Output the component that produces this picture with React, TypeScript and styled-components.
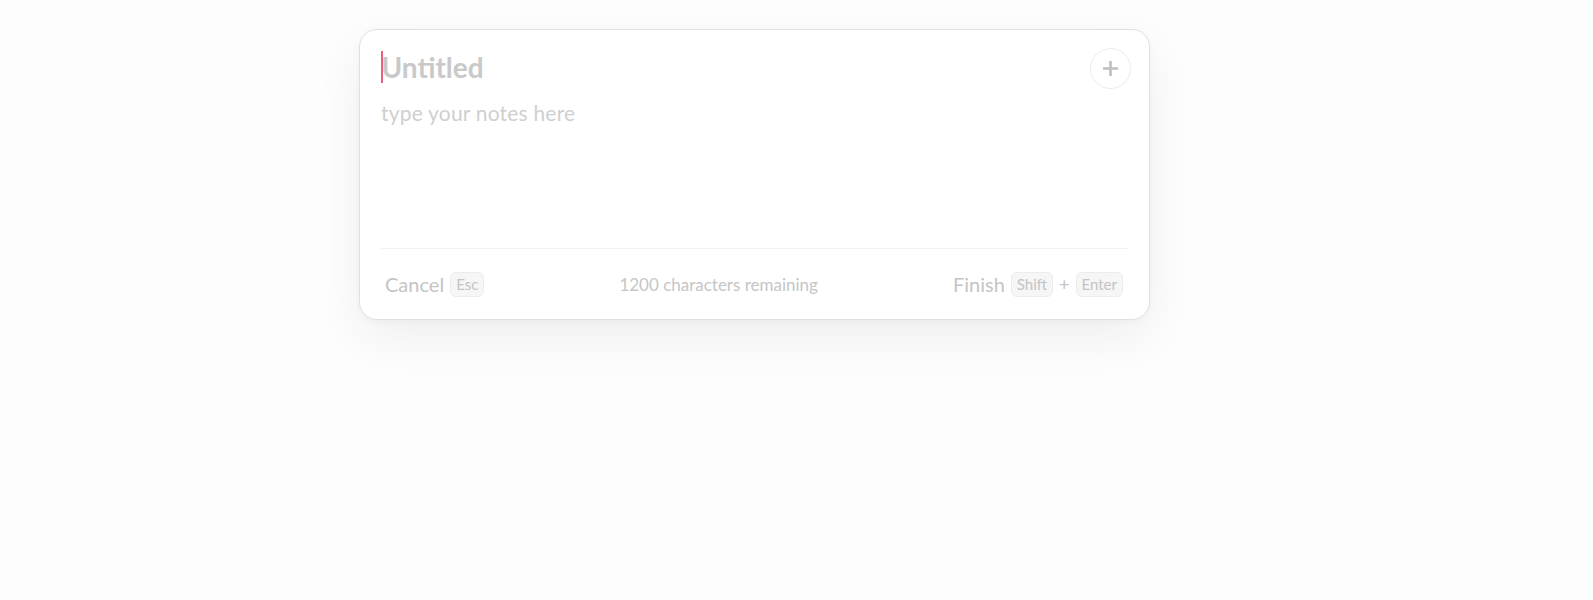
import * as React from "react";
import styled, { createGlobalStyle } from "styled-components";

const GlobalStyle = createGlobalStyle`
  html, body {
    margin: 0;
    padding: 0;
    background: #fdfdfd;
    font-family: "Lato", "Open Sans", sans-serif;
  }
`;

const Page = styled.div`
  width: 100%;
  min-height: 600px;
  padding: 29px 0 0 359px;
  box-sizing: border-box;
`;

const Card = styled.div`
  width: 791px;
  height: 291px;
  box-sizing: border-box;
  background: #ffffff;
  border: 1px solid #e0e0e0;
  border-radius: 18px;
  box-shadow: 0 18px 50px rgba(0, 0, 0, 0.06), 0 2px 6px rgba(0, 0, 0, 0.03);
  display: flex;
  flex-direction: column;
  padding: 21px 20px 0 21px;
`;

const Header = styled.div`
  display: flex;
  flex-direction: row;
  align-items: flex-start;
  justify-content: space-between;
`;

const Title = styled.div`
  display: flex;
  align-items: center;
  height: 32px;
  font-size: 28px;
  font-weight: 700;
  color: #c9c9c9;
`;

const Caret = styled.span`
  display: inline-block;
  width: 1.5px;
  height: 32px;
  background: #ec5f7b;
  margin-right: -1px;
`;

const AddButton = styled.button`
  width: 41px;
  height: 41px;
  margin-top: -3px;
  margin-right: -2px;
  border-radius: 50%;
  border: 1px solid #ebebeb;
  background: #ffffff;
  display: flex;
  align-items: center;
  justify-content: center;
  padding: 0;
`;

const Notes = styled.div`
  flex: 1;
  margin-top: 10px;
  font-size: 21px;
  line-height: 28px;
  letter-spacing: 0.2px;
  color: #cfcfcf;
`;

const Footer = styled.div`
  height: 70px;
  border-top: 1px solid #f1f1f1;
  display: flex;
  align-items: center;
  justify-content: space-between;
  padding: 0 6px 0 4px;
`;

const Group = styled.div`
  display: flex;
  align-items: center;
  gap: 6px;
`;

const Action = styled.span`
  font-size: 20px;
  color: #c4c4c4;
`;

const Kbd = styled.span`
  display: inline-flex;
  align-items: center;
  justify-content: center;
  height: 25px;
  padding: 0 5px;
  box-sizing: border-box;
  border-radius: 6px;
  background: #f6f6f6;
  border: 1px solid #ececec;
  font-size: 15px;
  color: #c4c4c4;
`;

const Plus = styled.span`
  font-size: 18px;
  color: #c4c4c4;
`;

const Remaining = styled.span`
  font-size: 17px;
  color: #c6c6c6;
`;

export default function App() {
  return (
    <Page>
      <GlobalStyle />
      <Card>
        <Header>
          <Title>
            <Caret />
            Untitled
          </Title>
          <AddButton type="button" aria-label="Add">
            <svg width="17" height="17" viewBox="0 0 17 17">
              <path d="M8.5 1v15M1 8.5h15" stroke="#bfbfbf" strokeWidth="2.6" />
            </svg>
          </AddButton>
        </Header>
        <Notes>type your notes here</Notes>
        <Footer>
          <Group>
            <Action>Cancel</Action>
            <Kbd>Esc</Kbd>
          </Group>
          <Remaining>1200 characters remaining</Remaining>
          <Group>
            <Action>Finish</Action>
            <Kbd>Shift</Kbd>
            <Plus>+</Plus>
            <Kbd>Enter</Kbd>
          </Group>
        </Footer>
      </Card>
    </Page>
  );
}
